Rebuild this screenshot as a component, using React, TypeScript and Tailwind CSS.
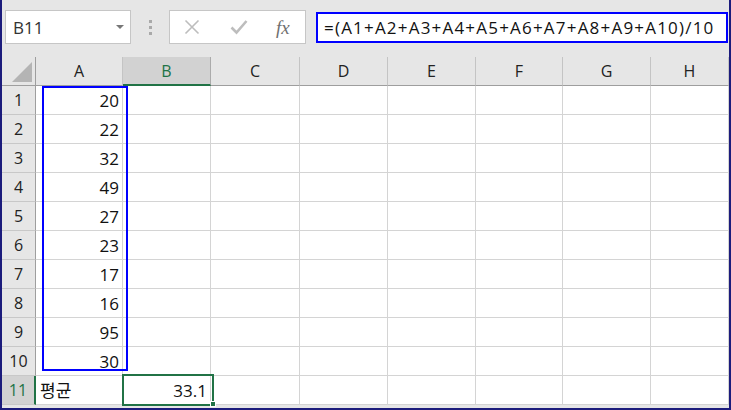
import React from 'react';

const cols = [
  { name: 'A', w: 'w-[87px]' },
  { name: 'B', w: 'w-[88px]' },
  { name: 'C', w: 'w-[89px]' },
  { name: 'D', w: 'w-[88px]' },
  { name: 'E', w: 'w-[88px]' },
  { name: 'F', w: 'w-[87px]' },
  { name: 'G', w: 'w-[88px]' },
  { name: 'H', w: 'w-[78px]' },
];

const values = ['20', '22', '32', '49', '27', '23', '17', '16', '95', '30'];

const font = "font-['Segoe_UI','Open_Sans','Noto_Sans_CJK_KR',sans-serif]";

function Row({ n, a, b, active }: { n: number; a?: string; b?: string; active?: boolean }) {
  return (
    <div className="flex h-[29px]">
      <div
        className={
          active
            ? 'w-[34px] shrink-0 flex items-center justify-center bg-[#d2d2d2] text-[#217346] border-r-2 border-[#217346] border-b border-b-[#c8c8c8]'
            : 'w-[34px] shrink-0 flex items-center justify-center bg-[#e6e6e6] text-[#222] border-r border-[#9e9e9e] border-b border-b-[#c8c8c8]'
        }
      >
        {n}
      </div>
      {cols.map((c, i) => (
        <div
          key={c.name}
          className={`${c.w} shrink-0 flex items-center border-r border-b border-[#d4d4d4] bg-white text-[#111] text-[17px] ${
            i === 0 && n === 11 ? 'justify-start pl-[4px]' : 'justify-end pr-[3px]'
          }`}
        >
          {i === 0 ? a : i === 1 ? b : null}
        </div>
      ))}
    </div>
  );
}

export default function App() {
  return (
    <div className={`w-[731px] h-[410px] overflow-hidden bg-[#e6e6e6] border-l-2 border-r-2 border-b-2 border-[#1c1c7c] ${font} text-[16px] leading-none relative`}>
      {/* formula toolbar */}
      <div className="h-[57px] flex items-start pt-[10px]">
        <div className="ml-[3px] w-[126px] h-[34px] bg-white border border-[#c6c6c6] flex items-center pl-[7px] pr-[6px] text-[#333] text-[17px]">
          <span className="flex-1">B11</span>
          <svg width="8" height="5" viewBox="0 0 8 5"><path d="M0 0h8L4 4z" fill="#777" /></svg>
        </div>
        <div className="w-[38px] h-[34px] flex flex-col items-center justify-center gap-[3px]">
          <span className="w-[3px] h-[3px] bg-[#a9a9a9]" />
          <span className="w-[3px] h-[3px] bg-[#a9a9a9]" />
          <span className="w-[3px] h-[3px] bg-[#a9a9a9]" />
        </div>
        <div className="w-[137px] h-[34px] bg-white border border-[#c6c6c6] flex items-center">
          <svg className="ml-[14px]" width="16" height="16" viewBox="0 0 16 16">
            <path d="M1.5 1.5l13 13M14.5 1.5l-13 13" stroke="#bdbdbd" strokeWidth="1.6" />
          </svg>
          <svg className="ml-[30px]" width="18" height="16" viewBox="0 0 18 16">
            <path d="M1.5 8.5l5 5L16.5 2" stroke="#bdbdbd" strokeWidth="2.6" fill="none" />
          </svg>
          <span className="ml-[28px] font-['Liberation_Serif',serif] italic text-[19px] text-[#707070]">
            fx
          </span>
        </div>
        <div className="ml-[10px] mt-[2px] w-[412px] h-[31px] bg-white border-2 border-[#0000ff] flex items-center pl-[6px] text-[#111] text-[17px] tracking-[1.2px] whitespace-nowrap">
          =(A1+A2+A3+A4+A5+A6+A7+A8+A9+A10)/10
        </div>
      </div>

      {/* grid */}
      <div className="flex h-[29px] bg-[#e6e6e6]">
        <div className="w-[34px] shrink-0 border-r border-b border-[#9e9e9e] flex items-end justify-end p-[3px]">
          <svg width="20" height="20" viewBox="0 0 20 20"><path d="M20 0V20H0z" fill="#b4b4b4" /></svg>
        </div>
        {cols.map((c) => (
          <div
            key={c.name}
            className={
              c.name === 'B'
                ? `${c.w} shrink-0 flex items-center justify-center bg-[#d2d2d2] text-[#217346] border-r border-[#ababab] border-b-2 border-b-[#217346]`
                : `${c.w} shrink-0 flex items-center justify-center text-[#222] border-r border-[#c4c4c4] border-b border-b-[#9e9e9e]`
            }
          >
            {c.name}
          </div>
        ))}
      </div>
      {values.map((v, i) => (
        <Row key={i} n={i + 1} a={v} />
      ))}
      <Row n={11} a="평균" b="33.1" active />

      {/* range highlight A1:A10 */}
      <div className="absolute left-[40px] top-[86px] w-[86px] h-[285px] border-2 border-[#0000ff] pointer-events-none" />
      {/* active cell B11 */}
      <div className="absolute left-[120px] top-[374px] w-[92px] h-[32px] border-2 border-[#217346] pointer-events-none" />
      <div className="absolute left-[208px] top-[401px] w-[6px] h-[6px] bg-[#217346] border border-white" />
    </div>
  );
}
